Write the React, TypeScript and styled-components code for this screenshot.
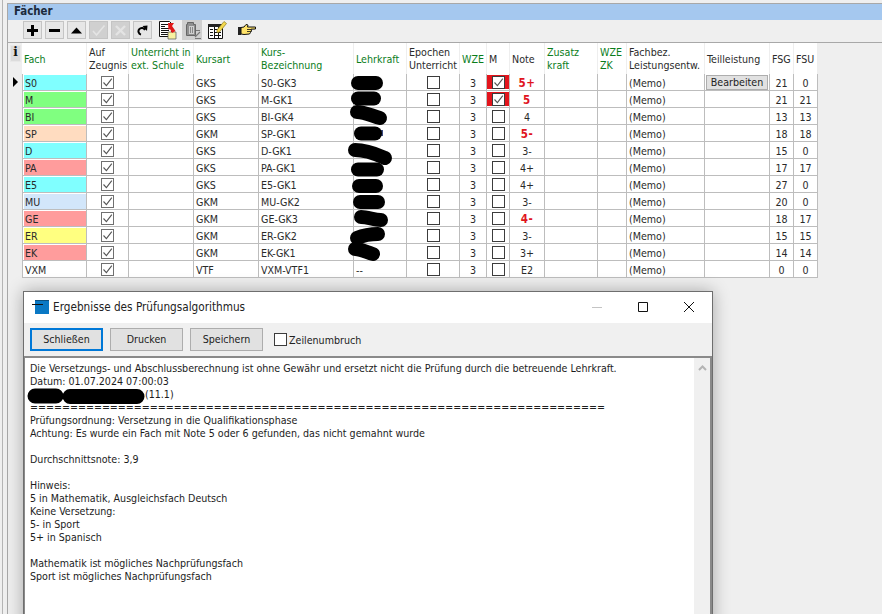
import React from "react";
import styled, { createGlobalStyle, css } from "styled-components";

const Global = createGlobalStyle`
  html, body { margin: 0; padding: 0; height: 100%; background: #efefef; overflow: hidden; }
  #root { height: 100%; }
  * { box-sizing: border-box; }
`;

const FONT = `"DejaVu Sans", "Noto Sans", sans-serif`;

const Page = styled.div`
  position: relative;
  width: 882px;
  height: 614px;
  overflow: hidden;
  background: #efefef;
  font-family: ${FONT};
  font-stretch: condensed;
  font-size: 10.6px;
  color: #222;
  padding-left: 2px;
`;

const OuterFrame = styled.div`
  height: 100%;
  border-left: 1px solid #b4b4b4;
  padding: 3px 0 0 4px;
`;

const Panel = styled.section`
  height: 100%;
  border-left: 1px solid #a8a8a8;
  border-top: 1px solid #a8a8a8;
`;

const PanelTitle = styled.h2`
  margin: 0;
  height: 16px;
  padding-left: 6px;
  background: #a5c8ef;
  font-size: 11.4px;
  line-height: 15px;
  font-weight: bold;
  color: #1c2a3c;
`;

const Toolbar = styled.div`
  height: 23px;
  display: flex;
  align-items: center;
  padding: 0 0 2px 15px;
  background: #efefef;
  border-bottom: 1px solid #a8a8a8;
`;

const ToolButton = styled.button<{ $off?: boolean; $after?: number }>`
  width: 19px;
  height: 18px;
  margin: 0 3px 0 0;
  margin-right: ${(p) => p.$after ?? 3}px;
  padding: 0;
  border: 1px solid #c4c4c4;
  background: ${(p) => (p.$off ? "#d0d0d0" : "#e6e6e6")};
  display: flex;
  align-items: center;
  justify-content: center;
`;

const ImageTool = styled.span<{ $after?: number; $off?: boolean }>`
  width: 20px;
  height: 20px;
  margin-right: ${(p) => p.$after ?? 5}px;
  display: block;
  background: ${(p) => (p.$off ? "#cfcfcf" : "transparent")};
`;

const WIDTHS = "12px 65px 42px 65px 65px 95px 53px 53px 27px 23px 35px 53px 29px 78px 65px 24px 24px";

const GridWrap = styled.div`
  position: relative;
  margin-left: 2px;
  width: 808px;
`;

const Grid = styled.div`
  display: grid;
  grid-template-columns: ${WIDTHS};
  grid-auto-rows: 17px;
  grid-template-rows: 31px;
`;

const InfoCell = styled.div`
  background: #efefef;
  padding-top: 2px;
`;

const InfoButton = styled.span`
  display: block;
  width: 11px;
  height: 17px;
  background: #dcdcdc;
  border: 1px solid #e8e8e8;
  font-family: "DejaVu Serif", "Liberation Serif", serif;
  font-stretch: normal;
  font-weight: bold;
  font-size: 12px;
  line-height: 13px;
  text-align: center;
  color: #111;
`;

const HeadCell = styled.div<{ $green?: boolean }>`
  background: #fff;
  border-right: 1px solid #eeeeee;
  display: flex;
  align-items: center;
  padding: 1px 0 0 2px;
  line-height: 13px;
  white-space: pre-line;
  color: ${(p) => (p.$green ? "#0b7d1b" : "#2a2a2a")};
`;

const Marker = styled.div`
  background: #efefef;
  display: flex;
  align-items: center;
  justify-content: flex-end;
  padding: 0 4px 1px 0;
`;

const Triangle = styled.span`
  width: 0;
  height: 0;
  border-left: 5px solid #000;
  border-top: 5px solid transparent;
  border-bottom: 5px solid transparent;
`;

const Cell = styled.div<{ $center?: boolean }>`
  background: #fff;
  border-right: 1px solid #bdbdbd;
  border-bottom: 1px solid #bdbdbd;
  display: flex;
  align-items: center;
  justify-content: ${(p) => (p.$center ? "center" : "flex-start")};
  padding: ${(p) => (p.$center ? "1px 0 0" : "1px 0 0 2px")};
  color: #2a2a2a;
  white-space: nowrap;
  overflow: hidden;
`;

const BoxCell = styled(Cell)`
  padding: 0;
`;

const FachCell = styled(Cell)<{ $color: string }>`
  border-left: 1px solid #bdbdbd;
  padding: 1px 0 0 1px;
  align-items: stretch;
  & > span {
    flex: 1;
    background: ${(p) => p.$color};
    padding: 1px 0 0 1px;
    line-height: 15px;
  }
`;

const MCell = styled(BoxCell)<{ $red?: boolean }>`
  ${(p) => p.$red && css`background: #e3141c; box-shadow: inset 0 1px 0 #fff, inset 0 -1px 0 #fff;`}
`;

const Box = styled.span<{ $soft?: boolean }>`
  width: 13px;
  height: 13px;
  display: block;
  flex: none;
  background: #fff;
  border: 1px solid ${(p) => (p.$soft ? "#707070" : "#3c3c3c")};
`;

const CheckMark = styled.svg`
  display: block;
  width: 11px;
  height: 11px;
`;

const NoteText = styled.span<{ $bad?: boolean }>`
  font-weight: ${(p) => (p.$bad ? "bold" : "normal")};
  font-size: ${(p) => (p.$bad ? "11.5px" : "10.6px")};
  color: ${(p) => (p.$bad ? "#e0141e" : "#2a2a2a")};
  letter-spacing: ${(p) => (p.$bad ? "0.6px" : "0")};
`;

const EditButton = styled.button`
  width: 62px;
  height: 15px;
  margin: -1px 0 0 -1px;
  padding: 0;
  border: 1px solid #adadad;
  background: #e1e1e1;
  font: inherit;
  font-stretch: condensed;
  line-height: 12px;
  color: #222;
`;

const Scribbles = styled.svg`
  position: absolute;
  left: 0;
  top: 0;
  width: 808px;
  height: 236px;
  pointer-events: none;
`;

const Dialog = styled.div`
  position: absolute;
  left: 23px;
  top: 291px;
  width: 690px;
  height: 340px;
  background: #fff;
  border-top: 1px solid #6e6e6e;
  border-left: 1px solid #6e6e6e;
  border-right: 1px solid #6e6e6e;
  box-shadow: 0 0 16px rgba(0, 0, 0, 0.3);
  display: flex;
  flex-direction: column;
`;

const TitleBar = styled.div`
  height: 31px;
  flex: none;
  background: #fff;
  display: flex;
  align-items: center;
  padding: 0 0 2px 8px;
`;

const AppIcon = styled.svg`
  width: 17px;
  height: 14px;
  margin-right: 4px;
  flex: none;
`;

const TitleText = styled.span`
  flex: 1;
  font-size: 11.7px;
  color: #222;
`;

const WinButton = styled.span`
  width: 46px;
  height: 28px;
  display: flex;
  align-items: center;
  justify-content: center;
`;

const DialogTools = styled.div`
  height: 35px;
  flex: none;
  background: #f0f0f0;
  border-bottom: 2px solid #8a8a8a;
  display: flex;
  align-items: center;
  padding: 0 0 1px 6px;
`;

const DialogButton = styled.button<{ $primary?: boolean }>`
  width: 73px;
  height: 23px;
  margin-right: 7px;
  padding: 0;
  background: #e1e1e1;
  border: ${(p) => (p.$primary ? "2px solid #0078d7" : "1px solid #adadad")};
  font: inherit;
  font-stretch: condensed;
  color: #222;
`;

const WrapOption = styled.label`
  display: flex;
  align-items: center;
  gap: 2px;
  margin-left: 4px;
  padding-top: 1px;
`;

const DialogBody = styled.div`
  flex: 1;
  display: flex;
  min-height: 0;
  border-left: 1px solid #8a8a8a;
  border-right: 2px solid #8a8a8a;
`;

const ReportText = styled.div`
  flex: 1;
  padding: 4px 0 0 5px;
  line-height: 13px;
  color: #1c1c1c;
  white-space: pre;
`;

const Redaction = styled.svg`
  width: 117px;
  height: 13px;
  margin-left: -2px;
  vertical-align: top;
  overflow: visible;
`;

const ScrollBar = styled.div`
  width: 16px;
  flex: none;
  background: #f0f0f0;
  display: flex;
  justify-content: center;
  padding-top: 7px;
`;

type Row = {
  fach: string; color: string; art: string; kurs: string; m?: boolean; note: string; bad?: boolean;
  fsg: string; fsu: string; lehr?: string; edit?: boolean; mark?: boolean;
};

const ROWS: Row[] = [
  { fach: "S0", color: "#80ffff", art: "GKS", kurs: "S0-GK3", m: true, note: "5+", bad: true, fsg: "21", fsu: "0", edit: true, mark: true },
  { fach: "M", color: "#80ff80", art: "GKS", kurs: "M-GK1", m: true, note: "5", bad: true, fsg: "21", fsu: "21" },
  { fach: "BI", color: "#80ff80", art: "GKS", kurs: "BI-GK4", note: "4", fsg: "13", fsu: "13" },
  { fach: "SP", color: "#ffdcc0", art: "GKM", kurs: "SP-GK1", note: "5-", bad: true, fsg: "18", fsu: "18" },
  { fach: "D", color: "#80ffff", art: "GKS", kurs: "D-GK1", note: "3-", fsg: "15", fsu: "0" },
  { fach: "PA", color: "#ff9c9c", art: "GKS", kurs: "PA-GK1", note: "4+", fsg: "17", fsu: "17" },
  { fach: "E5", color: "#80ffff", art: "GKS", kurs: "E5-GK1", note: "4+", fsg: "27", fsu: "0" },
  { fach: "MU", color: "#d2e6fa", art: "GKM", kurs: "MU-GK2", note: "3-", fsg: "20", fsu: "0" },
  { fach: "GE", color: "#ff9c9c", art: "GKM", kurs: "GE-GK3", note: "4-", bad: true, fsg: "18", fsu: "17" },
  { fach: "ER", color: "#ffff80", art: "GKM", kurs: "ER-GK2", note: "3-", fsg: "15", fsu: "15" },
  { fach: "EK", color: "#ff9c9c", art: "GKM", kurs: "EK-GK1", note: "3+", fsg: "14", fsu: "14" },
  { fach: "VXM", color: "#ffffff", art: "VTF", kurs: "VXM-VTF1", note: "E2", fsg: "0", fsu: "0", lehr: "--" },
];

const HEADS: { t: string; g?: boolean }[] = [
  { t: "Fach", g: true },
  { t: "Auf\nZeugnis" },
  { t: "Unterricht in\next. Schule", g: true },
  { t: "Kursart", g: true },
  { t: "Kurs-\nBezeichnung", g: true },
  { t: "Lehrkraft", g: true },
  { t: "Epochen\nUnterricht" },
  { t: "WZE", g: true },
  { t: "M" },
  { t: "Note" },
  { t: "Zusatz\nkraft", g: true },
  { t: "WZE\nZK", g: true },
  { t: "Fachbez.\nLeistungsentw." },
  { t: "Teilleistung" },
  { t: "FSG" },
  { t: "FSU" },
];

const Check = () => (
  <CheckMark viewBox="0 0 11 11">
    <path d="M1.5 5.5 L4.4 8.6 L9.8 1.6" fill="none" stroke="#555" strokeWidth="1.1" />
  </CheckMark>
);

const CheckBox = ({ on, soft }: { on?: boolean; soft?: boolean }) => (
  <Box $soft={soft}>{on && <Check />}</Box>
);

const STROKES = [
  "M348 40 L366 40",
  "M348 55.5 L364 55.5",
  "M347 69 C355 69 362 73 370 75",
  "M351 90.5 L365 90.5",
  "M345 107 C358 107 368 112 375 115",
  "M348 126.5 L367 126.5",
  "M349 143 L366 143",
  "M350 159 L368 159",
  "M351 174 C358 174 364 177 371 177",
  "M347 195 C354 192 362 191 368 191",
  "M345 206 C352 206 358 210 363 211",
];

const Hand = () => (
  <svg width="20" height="20" viewBox="0 0 20 20">
    <path d="M1 7h3v8H1z" fill="#222" />
    <path d="M4 7.5 L7 7 L9 4.5 L11 5 L10.5 7 L18.5 7 L18.5 9 L14 9.2 L14.5 11 L13.5 12.5 L12.5 14 L7 14.5 L4 14 Z" fill="#ffe36a" stroke="#111" strokeWidth="1" />
    <path d="M10 9.5h4M10 11.5h4" stroke="#111" strokeWidth="0.8" />
  </svg>
);

const ReportDoc = () => (
  <svg width="20" height="20" viewBox="0 0 20 20">
    <path d="M2.5 1.5h10l2 2v13h-12z" fill="#fff" stroke="#111" />
    <path d="M4 4.5h7M4 6.5h4M4 8.5h8M4 10.5h8M4 12.5h8M4 14.5h8" stroke="#111" />
    <path d="M11 12h8v7h-8z" fill="#f8f0a0" stroke="#555" strokeWidth=".7" />
    <path d="M11 3 L17 3 L15 6 L18.5 11 L15 13 L13 9 L11.5 10z" fill="#e01818" />
  </svg>
);

const OffDoc = () => (
  <svg width="20" height="20" viewBox="0 0 20 20">
    <path d="M5.5 2.5h6v2h2v11h-9v-11h1z" fill="#8f8f8f" stroke="#666" />
    <path d="M7 6h5v8H7z" fill="#cfcfcf" />
    <path d="M8.5 7v6M10.5 7v6" stroke="#888" />
    <path d="M14 10.5h4M13 17l5-5M13 18.5h6" stroke="#777" strokeWidth="1.1" fill="none" />
  </svg>
);

const TableEdit = () => (
  <svg width="20" height="20" viewBox="0 0 20 20">
    <path d="M1.5 4.5h14v14h-14z" fill="#fff" stroke="#111" />
    <path d="M1 4h15v3H1z" fill="#222" />
    <path d="M3 9.5h3M3 12.5h3M3 15.5h3M8 9.5h6M8 12.5h6M8 15.5h6M7.5 7v11M11.5 7v11" stroke="#111" />
    <path d="M10 10 L17 1.5 L19.5 3.5 L12.5 12 L10 12.5z" fill="#f4d84e" stroke="#8a7a20" strokeWidth=".7" />
  </svg>
);

export default function App() {
  return (
    <Page>
      <Global />
      <OuterFrame>
        <Panel>
          <PanelTitle>Fächer</PanelTitle>
          <Toolbar>
            <ToolButton aria-label="Neu">
              <svg width="11" height="11" viewBox="0 0 11 11"><path d="M4 0h3v4h4v3H7v4H4V7H0V4h4z" fill="#000" /></svg>
            </ToolButton>
            <ToolButton aria-label="Löschen">
              <svg width="11" height="11" viewBox="0 0 11 11"><path d="M0 4h11v3H0z" fill="#000" /></svg>
            </ToolButton>
            <ToolButton aria-label="Hoch">
              <svg width="11" height="7" viewBox="0 0 11 7"><path d="M5.5 0.5 L11 6.5 H0z" fill="#000" /></svg>
            </ToolButton>
            <ToolButton $off aria-label="Übernehmen">
              <svg width="15" height="13" viewBox="0 0 15 13"><path d="M2 7 L5.5 11 L13.5 1.5" fill="none" stroke="#e4e4e4" strokeWidth="1.6" /></svg>
            </ToolButton>
            <ToolButton $off aria-label="Abbrechen">
              <svg width="13" height="13" viewBox="0 0 13 13"><path d="M2 2 L11 11 M11 2 L2 11" fill="none" stroke="#e4e4e4" strokeWidth="2.4" /></svg>
            </ToolButton>
            <ToolButton $after={5} aria-label="Aktualisieren">
              <svg width="11" height="11" viewBox="0 0 11 11"><path d="M8 5 A3.4 3.4 0 1 0 4 9.6" fill="none" stroke="#000" strokeWidth="2" /><path d="M5.5 1 L10.5 0.5 L10 6z" fill="#000" /></svg>
            </ToolButton>
            <ImageTool><ReportDoc /></ImageTool>
            <ImageTool $off><OffDoc /></ImageTool>
            <ImageTool $after={10}><TableEdit /></ImageTool>
            <ImageTool><Hand /></ImageTool>
          </Toolbar>
          <GridWrap>
            <Grid>
              <InfoCell><InfoButton>i</InfoButton></InfoCell>
              {HEADS.map((h) => (
                <HeadCell key={h.t} $green={h.g}>{h.t}</HeadCell>
              ))}
              {ROWS.map((r) => (
                <React.Fragment key={r.fach}>
                  <Marker>{r.mark && <Triangle />}</Marker>
                  <FachCell $color={r.color}><span>{r.fach}</span></FachCell>
                  <BoxCell $center><CheckBox on soft /></BoxCell>
                  <Cell />
                  <Cell>{r.art}</Cell>
                  <Cell>{r.kurs}</Cell>
                  <Cell>{r.lehr}</Cell>
                  <BoxCell $center><CheckBox /></BoxCell>
                  <Cell $center>3</Cell>
                  <MCell $center $red={r.m}><CheckBox on={r.m} /></MCell>
                  <Cell $center><NoteText $bad={r.bad}>{r.note}</NoteText></Cell>
                  <Cell />
                  <Cell />
                  <Cell>(Memo)</Cell>
                  <Cell>{r.edit && <EditButton>Bearbeiten</EditButton>}</Cell>
                  <Cell $center>{r.fsg}</Cell>
                  <Cell $center>{r.fsu}</Cell>
                </React.Fragment>
              ))}
            </Grid>
            <Scribbles viewBox="0 0 808 236">
              <path d="M372 87v6" stroke="#3a4a80" strokeWidth="2" />
              {STROKES.map((d) => (
                <path key={d} d={d} fill="none" stroke="#000" strokeWidth="14" strokeLinecap="round" />
              ))}
            </Scribbles>
          </GridWrap>
        </Panel>
      </OuterFrame>

      <Dialog>
        <TitleBar>
          <AppIcon viewBox="0 0 17 14">
            <path d="M3 0h14v14H3z" fill="#0a78c4" />
            <path d="M3 0h14v1H3z" fill="#0a4f80" />
            <path d="M0 4h11v1H0z" fill="#111" />
          </AppIcon>
          <TitleText>Ergebnisse des Prüfungsalgorithmus</TitleText>
          <WinButton>
            <svg width="10" height="10" viewBox="0 0 10 10"><path d="M0 5.5h10" stroke="#c4c4c4" /></svg>
          </WinButton>
          <WinButton>
            <svg width="10" height="10" viewBox="0 0 10 10"><path d="M.5.5h9v9h-9z" fill="none" stroke="#111" /></svg>
          </WinButton>
          <WinButton>
            <svg width="10" height="10" viewBox="0 0 10 10"><path d="M0 0L10 10M10 0L0 10" stroke="#111" /></svg>
          </WinButton>
        </TitleBar>
        <DialogTools>
          <DialogButton $primary>Schließen</DialogButton>
          <DialogButton>Drucken</DialogButton>
          <DialogButton>Speichern</DialogButton>
          <WrapOption><Box />Zeilenumbruch</WrapOption>
        </DialogTools>
        <DialogBody>
          <ReportText>
            {"Die Versetzungs- und Abschlussberechnung ist ohne Gewähr und ersetzt nicht die Prüfung durch die betreuende Lehrkraft.\nDatum: 01.07.2024 07:00:03\n"}
            <Redaction viewBox="0 0 117 13">
              <path d="M7 8H28M42 8.5H109" fill="none" stroke="#000" strokeWidth="15" strokeLinecap="round" />
            </Redaction>
            {"(11.1)\n"}
            {"=".repeat(72) + "\n"}
            {"Prüfungsordnung: Versetzung in die Qualifikationsphase\nAchtung: Es wurde ein Fach mit Note 5 oder 6 gefunden, das nicht gemahnt wurde\n\nDurchschnittsnote: 3,9\n\nHinweis:\n5 in Mathematik, Ausgleichsfach Deutsch\nKeine Versetzung:\n5- in Sport\n5+ in Spanisch\n\nMathematik ist mögliches Nachprüfungsfach\nSport ist mögliches Nachprüfungsfach"}
          </ReportText>
          <ScrollBar>
            <svg width="9" height="6" viewBox="0 0 9 6"><path d="M1 5 L4.5 1.5 L8 5" fill="none" stroke="#b4b4b4" strokeWidth="2" /></svg>
          </ScrollBar>
        </DialogBody>
      </Dialog>
    </Page>
  );
}
